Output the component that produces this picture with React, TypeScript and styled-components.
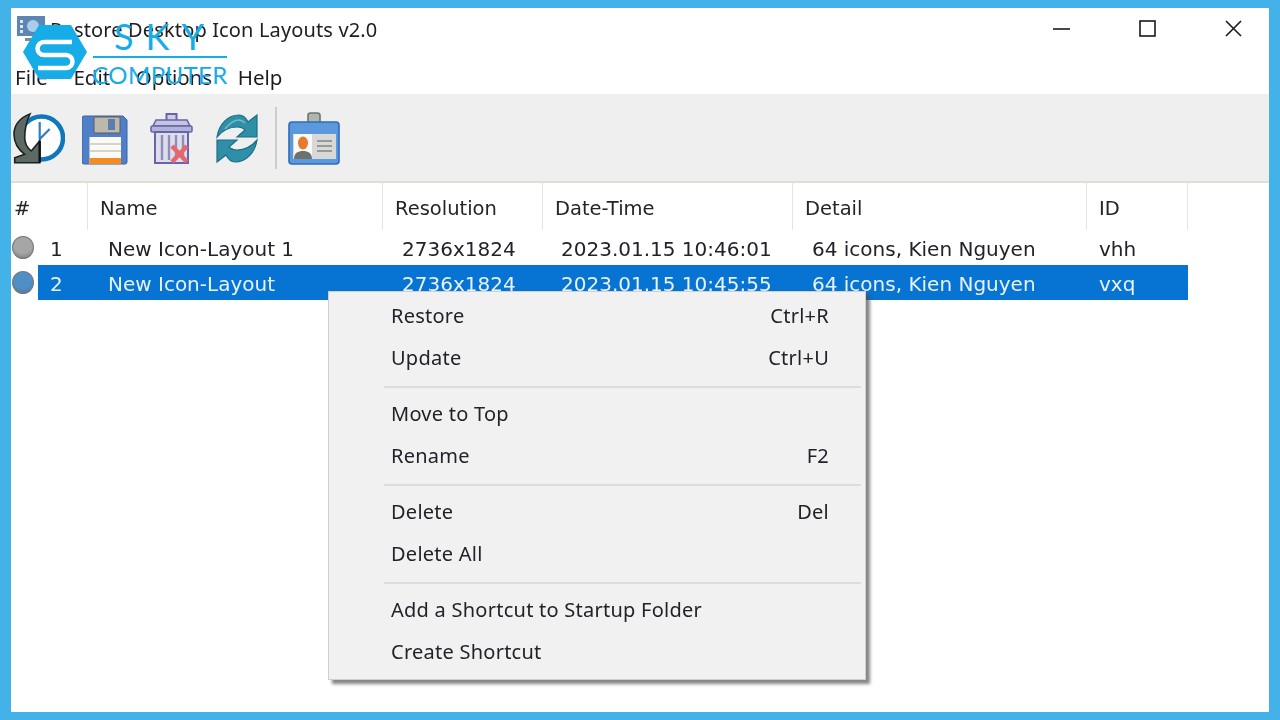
import React from "react";
import styled, { createGlobalStyle } from "styled-components";

const GlobalStyle = createGlobalStyle`
  html, body {
    margin: 0;
    padding: 0;
    background: #43b2e9;
  }
  body {
    font-family: "Noto Sans", "Liberation Sans", sans-serif;
  }
`;

const Frame = styled.div`
  position: relative;
  width: 1280px;
  height: 720px;
  box-sizing: border-box;
  padding: 8px 11px;
  background: #43b2e9;
  overflow: hidden;
`;

const Window = styled.div`
  display: flex;
  flex-direction: column;
  height: 100%;
  background: #ffffff;
  color: #1c1c24;
  filter: blur(0.4px);
`;

const TitleBar = styled.div`
  display: flex;
  align-items: center;
  height: 46px;
  padding-left: 5px;
  flex-shrink: 0;
`;

const AppIcon = styled.svg`
  width: 30px;
  height: 30px;
  margin-top: -4px;
  flex-shrink: 0;
`;

const Title = styled.div`
  margin: -3px 0 0 4px;
  font-size: 20px;
  letter-spacing: 0.14px;
  color: #202024;
`;

const WindowButtons = styled.div`
  display: flex;
  align-items: center;
  margin: -6px 0 0 auto;
  padding-right: 27px;
  gap: 69px;
`;

const MenuBar = styled.div`
  display: flex;
  align-items: center;
  gap: 25.7px;
  height: 40px;
  box-sizing: border-box;
  padding: 6px 0 0 4px;
  font-size: 20.5px;
  flex-shrink: 0;
`;

const Toolbar = styled.div`
  display: flex;
  align-items: center;
  height: 87px;
  background: #efefef;
  border-bottom: 2px solid #dfdfcf;
  flex-shrink: 0;
`;

const ToolIcon = styled.svg<{ $gap: number }>`
  height: 54px;
  flex-shrink: 0;
  margin-left: ${(p) => p.$gap}px;
`;

const ToolSeparator = styled.div`
  width: 2px;
  height: 62px;
  margin-left: 16px;
  background: #cdcdcd;
`;

const HeaderRow = styled.div`
  display: grid;
  grid-template-columns: 77px 295px 160px 250px 294px 101px;
  height: 47px;
  font-family: "DejaVu Sans", "Liberation Sans", sans-serif;
  font-size: 19.5px;
  flex-shrink: 0;
`;

const HeaderCell = styled.div<{ $first?: boolean }>`
  display: flex;
  align-items: center;
  padding: 4px 0 0 ${(p) => (p.$first ? 3 : 12)}px;
  border-right: 1px solid #e5e5e5;
  color: #24242c;
`;

const Row = styled.div`
  display: flex;
  height: 35px;
  flex-shrink: 0;
`;

const DotCell = styled.div`
  display: flex;
  align-items: center;
  width: 27px;
  padding-left: 1px;
  box-sizing: border-box;
`;

const Dot = styled.div<{ $color: string }>`
  width: 22px;
  height: 23px;
  margin-top: -1px;
  border-radius: 50%;
  border: 1px solid #74787c;
  box-sizing: border-box;
  background: radial-gradient(circle at 50% 30%, ${(p) => p.$color}, ${(p) => p.$color} 55%, #5a6570 115%);
`;

const RowBody = styled.div<{ $selected?: boolean }>`
  display: grid;
  grid-template-columns: 50px 295px 160px 250px 294px 101px;
  align-items: center;
  font-family: "DejaVu Sans", "Liberation Sans", sans-serif;
  font-size: 20px;
  background: ${(p) => (p.$selected ? "#0774d3" : "transparent")};
  color: ${(p) => (p.$selected ? "#e8f2fb" : "#22222a")};
`;

const Cell = styled.div<{ $pad: number }>`
  padding: 2px 0 0 ${(p) => p.$pad}px;
  white-space: nowrap;
`;

const ContextMenu = styled.div`
  position: absolute;
  left: 328px;
  top: 291px;
  width: 538px;
  height: 389px;
  box-sizing: border-box;
  padding: 4px 0 6px;
  background: #f1f1f1;
  border: 1px solid #cfcfcf;
  box-shadow: 4px 4px 3px rgba(70, 70, 70, 0.65);
  font-size: 20px;
  letter-spacing: 0.25px;
  color: #22222a;
  filter: blur(0.4px);
`;

const MenuItem = styled.div`
  display: flex;
  align-items: center;
  justify-content: space-between;
  height: 42px;
  box-sizing: border-box;
  padding: 0 36px 4px 62px;
`;

const MenuDivider = styled.div`
  height: 2px;
  margin: 6px 4px 6px 55px;
  background: #dcdcdc;
`;

const Watermark = styled.div`
  position: absolute;
  left: 23px;
  top: 25px;
  display: flex;
  align-items: flex-start;
  color: #16ace8;
  font-family: Lato, "Noto Sans", sans-serif;
  font-weight: 400;
`;

const LogoMark = styled.svg`
  width: 64px;
  height: 54px;
  flex-shrink: 0;
`;

const Brand = styled.div`
  display: flex;
  flex-direction: column;
  align-items: center;
  margin-left: 6px;
  width: 134px;
`;

const BrandTop = styled.div`
  font-size: 36px;
  line-height: 30px;
  letter-spacing: 12px;
  margin: -4px -10px 0 0;
`;

const BrandRule = styled.div`
  width: 134px;
  height: 2px;
  margin-top: 5px;
  background: #16ace8;
`;

const BrandBottom = styled.div`
  font-size: 24px;
  line-height: 28px;
  letter-spacing: 0.4px;
  margin-top: 3px;
  white-space: nowrap;
`;

const columns = ["#", "Name", "Resolution", "Date-Time", "Detail", "ID"];
const cellPads = [12, 20, 19, 18, 19, 12];

const rows = [
  { dot: "#a6a6a6", cells: ["1", "New Icon-Layout 1", "2736x1824", "2023.01.15 10:46:01", "64 icons, Kien Nguyen", "vhh"] },
  { dot: "#4f8fc8", selected: true, cells: ["2", "New Icon-Layout", "2736x1824", "2023.01.15 10:45:55", "64 icons, Kien Nguyen", "vxq"] },
];

const menuGroups = [
  [["Restore", "Ctrl+R"], ["Update", "Ctrl+U"]],
  [["Move to Top", ""], ["Rename", "F2"]],
  [["Delete", "Del"], ["Delete All", ""]],
  [["Add a Shortcut to Startup Folder", ""], ["Create Shortcut", ""]],
];

const ClockIcon = () => (
  <ToolIcon $gap={2} width="52" viewBox="0 0 52 54">
    <circle cx="28.5" cy="27" r="21.5" fill="#fff" stroke="#0f78bd" strokeWidth="4.5" />
    <path d="M26.7 11v17l10-10" stroke="#2f7fc4" strokeWidth="2.2" fill="none" />
    <path d="M17 3C6 7 1 15 1 23.3c0 8 4 15 10.7 20L1.7 46.7v5h25V30l-8.4 10c-5-4-6.6-8-6.6-13.3 0-9 2-17 5.3-23.7z" fill="#5d6a64" stroke="#1c2220" strokeWidth="1.6" />
    <path d="M26.7 30v21.7" stroke="#111" strokeWidth="2.4" />
  </ToolIcon>
);

const SaveIcon = () => (
  <ToolIcon $gap={17} width="46" viewBox="0 0 46 54">
    <path d="M2 5h39l4 4v42a2 2 0 0 1-2 2H2a2 2 0 0 1-2-2V7a2 2 0 0 1 2-2z" fill="#4f7fc8" stroke="#3a62a8" strokeWidth="1" />
    <rect x="12" y="6" width="26" height="16" rx="1" fill="#bdb8ac" stroke="#5f5c55" />
    <rect x="26" y="8" width="7" height="11" fill="#5a7fae" />
    <rect x="7.5" y="26" width="31.5" height="27" fill="#fbfaf6" />
    <path d="M7.5 33h31.5M7.5 40h31.5" stroke="#c9c6bc" strokeWidth="1.6" />
    <rect x="7.5" y="47" width="31.5" height="6" fill="#f28c22" />
  </ToolIcon>
);

const TrashIcon = () => (
  <ToolIcon $gap={22} width="44" viewBox="0 0 44 54">
    <path d="M16.5 9V3h10v6" fill="#cfcde4" stroke="#6664ac" strokeWidth="2" />
    <path d="M6 9h31l3 6H3z" fill="#c6c4e0" stroke="#6664ac" strokeWidth="1.6" />
    <rect x="1" y="15" width="41" height="6" rx="1.5" fill="#b4b2d6" stroke="#6664ac" strokeWidth="1.6" />
    <path d="M5 21h33v31H5z" fill="#dedde9" stroke="#6664ac" strokeWidth="2" />
    <path d="M12 24v25M19 24v25M26 24v25M33 24v25" stroke="#8f8dbd" strokeWidth="2.4" />
    <path d="M22 35l15 16M37 35L22 51" stroke="#e4686c" strokeWidth="4.5" />
  </ToolIcon>
);

const RefreshIcon = () => {
  const arrow = "M2 26C4 13 13 4 24 4c4 0 7 3 9 7l9-7v22H22l8-7c-2-2-5-3-8-3-8 0-15 4-20 10z";
  return (
    <ToolIcon $gap={21} width="44" viewBox="0 0 44 54">
      <path d={arrow} fill="#2f8fa6" stroke="#1d6e86" strokeWidth="1.2" />
      <path d={arrow} fill="#2f8fa6" stroke="#1d6e86" strokeWidth="1.2" transform="rotate(180 22 27.5)" />
      <path d="M10 18c4-5 9-9 14-9 2 0 4 1 6 3" fill="none" stroke="#6fbccb" strokeWidth="1.6" />
    </ToolIcon>
  );
};

const CardIcon = () => (
  <ToolIcon $gap={11} width="52" viewBox="0 0 52 54">
    <rect x="20" y="2" width="12" height="14" rx="2.5" fill="#aeb6ae" stroke="#6b756d" strokeWidth="1.6" />
    <rect x="1" y="11" width="50" height="42" rx="3" fill="#5c98de" stroke="#2f6cb8" strokeWidth="1.6" />
    <rect x="5" y="23" width="43" height="25" fill="#d8d8d8" />
    <rect x="6" y="23" width="18" height="25" fill="#fafafa" />
    <ellipse cx="15" cy="32" rx="5" ry="6.5" fill="#e57a30" />
    <path d="M6 48c0-6 4-8 9-8s9 2 9 8z" fill="#6e716c" />
    <path d="M29 30h15M29 35h15M29 40h15" stroke="#85857f" strokeWidth="1.6" />
  </ToolIcon>
);

const App = () => (
  <Frame>
    <GlobalStyle />
    <Window>
      <TitleBar>
        <AppIcon viewBox="0 0 30 30">
          <rect x="1" y="2" width="28" height="20" fill="#5d86b4" />
          <path d="M4 6h3v3H4zM4 11h3v3H4zM4 16h3v3H4z" fill="#dbe8f4" />
          <circle cx="17" cy="12" r="6" fill="#a9cdea" />
          <rect x="9" y="24" width="12" height="3" fill="#7c8a98" />
        </AppIcon>
        <Title>Restore Desktop Icon Layouts v2.0</Title>
        <WindowButtons>
          <svg width="17" height="17" viewBox="0 0 17 17">
            <path d="M0 9h17" stroke="#1a1a1a" strokeWidth="1.6" />
          </svg>
          <svg width="17" height="17" viewBox="0 0 17 17">
            <rect x="1" y="1" width="15" height="15" fill="none" stroke="#1a1a1a" strokeWidth="1.6" />
          </svg>
          <svg width="17" height="17" viewBox="0 0 17 17">
            <path d="M1 1l15 15M16 1L1 16" stroke="#1a1a1a" strokeWidth="1.6" />
          </svg>
        </WindowButtons>
      </TitleBar>
      <MenuBar>
        <span>File</span>
        <span>Edit</span>
        <span>Options</span>
        <span>Help</span>
      </MenuBar>
      <Toolbar>
        <ClockIcon />
        <SaveIcon />
        <TrashIcon />
        <RefreshIcon />
        <ToolSeparator />
        <CardIcon />
      </Toolbar>
      <HeaderRow>
        {columns.map((c, i) => (
          <HeaderCell key={c} $first={i === 0}>{c}</HeaderCell>
        ))}
      </HeaderRow>
      {rows.map((r) => (
        <Row key={r.cells[0]}>
          <DotCell>
            <Dot $color={r.dot} />
          </DotCell>
          <RowBody $selected={r.selected}>
            {r.cells.map((c, i) => (
              <Cell key={i} $pad={cellPads[i]}>{c}</Cell>
            ))}
          </RowBody>
        </Row>
      ))}
    </Window>
    <ContextMenu>
      {menuGroups.map((group, g) => (
        <React.Fragment key={g}>
          {g > 0 && <MenuDivider />}
          {group.map(([label, key]) => (
            <MenuItem key={label}>
              <span>{label}</span>
              <span>{key}</span>
            </MenuItem>
          ))}
        </React.Fragment>
      ))}
    </ContextMenu>
    <Watermark>
      <LogoMark viewBox="0 0 64 54">
        <path d="M16 0h32l16 27-16 27H16L0 27z" fill="#16ace8" />
        <path d="M49 17H21a6.5 6.5 0 0 0 0 13h22a6.5 6.5 0 0 1 0 13H15" fill="none" stroke="#fff" strokeWidth="4.5" />
      </LogoMark>
      <Brand>
        <BrandTop>SKY</BrandTop>
        <BrandRule />
        <BrandBottom>COMPUTER</BrandBottom>
      </Brand>
    </Watermark>
  </Frame>
);

export default App;
